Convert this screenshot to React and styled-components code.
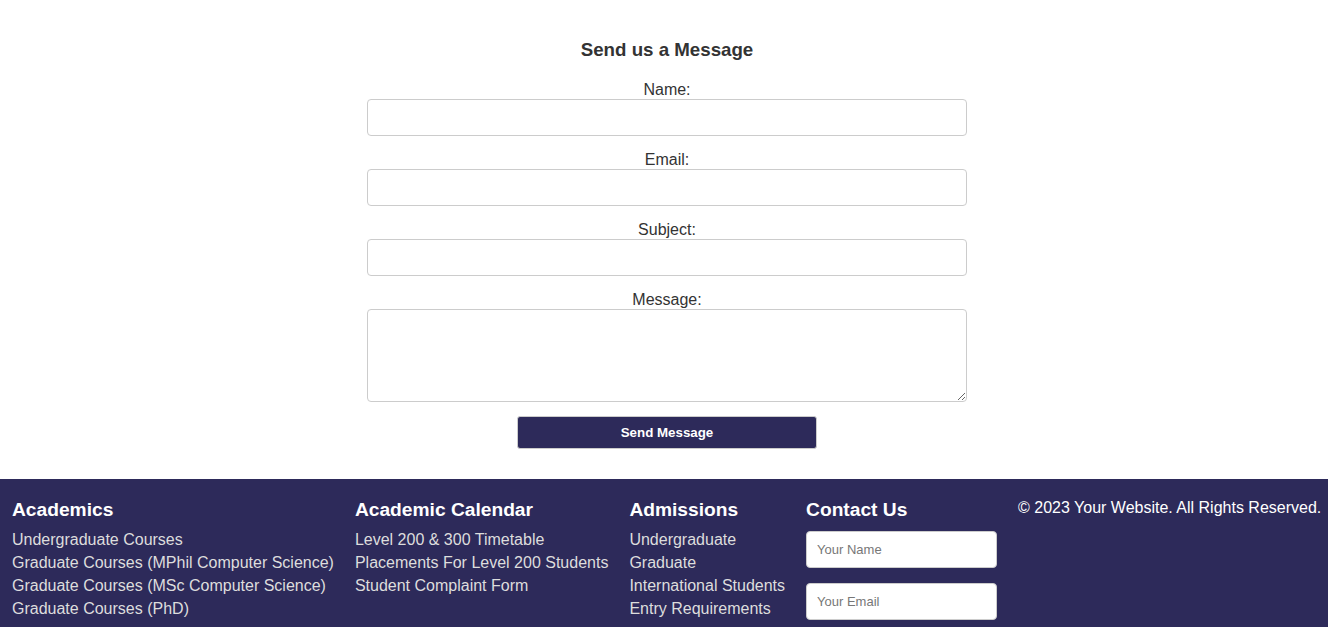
import React from 'react';
import styled, { createGlobalStyle } from 'styled-components';

const GlobalStyle = createGlobalStyle`
  html, body {
    margin: 0;
    padding: 0;
    background: #fff;
    font-family: "Liberation Sans", Arial, sans-serif;
  }
`;

const Page = styled.div`
  display: flex;
  flex-direction: column;
  min-height: 627px;
`;

const ContactSection = styled.section`
  display: flex;
  flex-direction: column;
  align-items: center;
  padding: 39px 0 30px 6px;
`;

const Title = styled.h2`
  margin: 0 0 20px;
  font-size: 18.72px;
  line-height: 21px;
  font-weight: bold;
  color: #333;
`;

const Form = styled.form`
  width: 600px;
  display: flex;
  flex-direction: column;
  align-items: center;
`;

const Label = styled.label`
  display: block;
  font-size: 16px;
  line-height: 18px;
  color: #333;
  padding-top: 1px;
  text-align: center;
`;

const Input = styled.input`
  box-sizing: border-box;
  width: 100%;
  height: 37px;
  margin: 0 0 14px;
  padding: 8px 10px;
  border: 1px solid #ccc;
  border-radius: 4px;
  font-family: inherit;
  font-size: 14px;
  background: #fff;
`;

const TextArea = styled.textarea`
  box-sizing: border-box;
  width: 100%;
  height: 93px;
  margin: 0 0 14px;
  padding: 8px 10px;
  border: 1px solid #ccc;
  border-radius: 4px;
  font-family: inherit;
  font-size: 14px;
  resize: vertical;
  display: block;
`;

const SendButton = styled.button`
  width: 300px;
  height: 33px;
  border: 1px solid #ccc;
  border-radius: 3px;
  background: #2d2a5a;
  color: #fff;
  font-family: inherit;
  font-size: 13.33px;
  font-weight: bold;
  cursor: pointer;
`;

const Footer = styled.footer`
  flex: 1;
  background: #2d2a5a;
  display: flex;
  align-items: flex-start;
  gap: 21px;
  padding: 19px 8px 10px 12px;
`;

const Column = styled.div`
  display: flex;
  flex-direction: column;
`;

const ColTitle = styled.h3`
  margin: 0 0 7px;
  font-size: 19.2px;
  line-height: 23px;
  font-weight: bold;
  color: #fff;
`;

const LinkItem = styled.a`
  display: block;
  color: #ddd;
  font-size: 16px;
  line-height: 23px;
  text-decoration: none;
  white-space: nowrap;
`;

const FooterInput = styled.input`
  box-sizing: border-box;
  width: 191px;
  height: 37px;
  margin: 3px 0 12px;
  padding: 8px 10px;
  border: 1px solid #ccc;
  border-radius: 4px;
  font-family: inherit;
  font-size: 13px;
  background: #fff;
  &::placeholder {
    color: #777;
  }
`;

const Copyright = styled.p`
  margin: 1px 0 0;
  color: #fff;
  font-size: 16px;
  line-height: 18px;
  white-space: nowrap;
`;

const columns = [
  {
    title: 'Academics',
    links: [
      'Undergraduate Courses',
      'Graduate Courses (MPhil Computer Science)',
      'Graduate Courses (MSc Computer Science)',
      'Graduate Courses (PhD)',
    ],
  },
  {
    title: 'Academic Calendar',
    links: ['Level 200 & 300 Timetable', 'Placements For Level 200 Students', 'Student Complaint Form'],
  },
  {
    title: 'Admissions',
    links: ['Undergraduate', 'Graduate', 'International Students', 'Entry Requirements'],
  },
];

export default function App() {
  return (
    <Page>
      <GlobalStyle />
      <ContactSection>
        <Title>Send us a Message</Title>
        <Form onSubmit={e => e.preventDefault()}>
          <Label htmlFor="name">Name:</Label>
          <Input id="name" type="text" />
          <Label htmlFor="email">Email:</Label>
          <Input id="email" type="email" />
          <Label htmlFor="subject">Subject:</Label>
          <Input id="subject" type="text" />
          <Label htmlFor="message">Message:</Label>
          <TextArea id="message" />
          <SendButton type="submit">Send Message</SendButton>
        </Form>
      </ContactSection>

      <Footer>
        {columns.map(col => (
          <Column key={col.title}>
            <ColTitle>{col.title}</ColTitle>
            {col.links.map(link => (
              <LinkItem key={link} href="#">{link}</LinkItem>
            ))}
          </Column>
        ))}
        <Column>
          <ColTitle>Contact Us</ColTitle>
          <FooterInput type="text" placeholder="Your Name" />
          <FooterInput type="email" placeholder="Your Email" />
        </Column>
        <Copyright>&copy; 2023 Your Website. All Rights Reserved.</Copyright>
      </Footer>
    </Page>
  );
}
